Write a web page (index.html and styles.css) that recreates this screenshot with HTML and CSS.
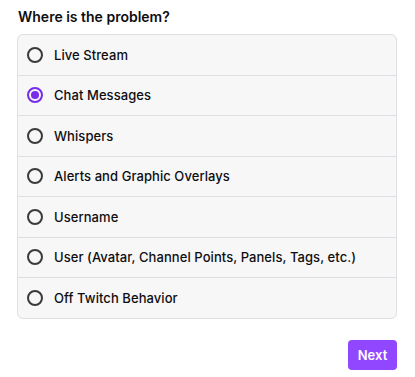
FILE: index.html
```html
<!DOCTYPE html>
<html>
<head>
<meta charset="utf-8">
<link rel="stylesheet" href="styles.css">
</head>
<body>
<div class="page">
  <div class="title">Where is the problem?</div>
  <div class="card">
    <label class="row"><span class="radio"></span><span class="label">Live Stream</span></label>
    <label class="row"><span class="radio checked"></span><span class="label">Chat Messages</span></label>
    <label class="row"><span class="radio"></span><span class="label">Whispers</span></label>
    <label class="row"><span class="radio"></span><span class="label">Alerts and Graphic Overlays</span></label>
    <label class="row"><span class="radio"></span><span class="label">Username</span></label>
    <label class="row"><span class="radio"></span><span class="label">User (Avatar, Channel Points, Panels, Tags, etc.)</span></label>
    <label class="row"><span class="radio"></span><span class="label">Off Twitch Behavior</span></label>
  </div>
  <div class="actions">
    <button class="next">Next</button>
  </div>
</div>
</body>
</html>
```
FILE: styles.css
```css
html, body {
  margin: 0;
  padding: 0;
  background: #ffffff;
}
body {
  font-family: Inter, "Noto Sans", sans-serif;
  color: #0e0e10;
}
.page {
  padding: 7px 18px 0 17px;
}
.title {
  font-size: 14px;
  font-weight: 600;
  line-height: 19px;
  padding-left: 1px;
  margin-bottom: 8px;
}
.card {
  background: #f7f7f8;
  border: 1px solid #dedee3;
  border-radius: 6px;
  display: flex;
  flex-direction: column;
}
.row {
  display: flex;
  align-items: center;
  height: 39.5px;
  padding-left: 9px;
  border-top: 1px solid #dedee3;
  box-sizing: content-box;
}
.row:first-child {
  border-top: none;
}
.radio {
  width: 16px;
  height: 16px;
  border: 2px solid #3a3a3d;
  border-radius: 50%;
  box-sizing: border-box;
  position: relative;
  flex: none;
}
.radio.checked {
  border-color: #772ce8;
}
.radio.checked::after {
  content: "";
  position: absolute;
  left: 2px;
  top: 2px;
  width: 8px;
  height: 8px;
  border-radius: 50%;
  background: #772ce8;
}
.label {
  margin-left: 11px;
  font-size: 13px;
  font-weight: 500;
  line-height: 18px;
  letter-spacing: 0.07px;
}
.actions {
  display: flex;
  justify-content: flex-end;
  margin-top: 21px;
}
.next {
  width: 49px;
  height: 30px;
  border: none;
  border-radius: 4px;
  background: #9147ff;
  color: #ffffff;
  font-family: Inter, "Noto Sans", sans-serif;
  font-size: 13px;
  font-weight: 600;
  padding: 0;
}
```
